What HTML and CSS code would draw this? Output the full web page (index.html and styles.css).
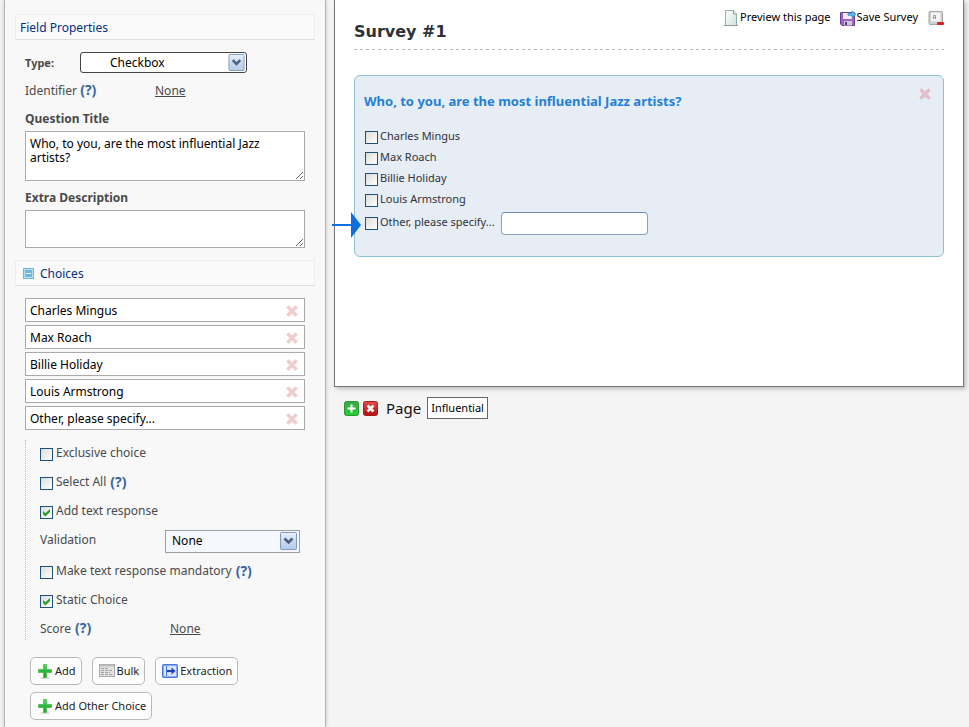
FILE: index.html
```html
<!DOCTYPE html>
<html lang="en">
<head>
<meta charset="utf-8">
<meta name="viewport" content="width=device-width, initial-scale=1">
<title>Survey Editor</title>
<link rel="stylesheet" href="styles.css">
</head>
<body>
<svg class="defs" aria-hidden="true">
  <defs>
    <linearGradient id="arrowFill" x1="0" y1="0" x2="0" y2="1"><stop offset="0" stop-color="#eaf1fb"/><stop offset="0.5" stop-color="#c9daf1"/><stop offset="1" stop-color="#b5cbe8"/></linearGradient>
    <linearGradient id="greenFill" x1="0" y1="0" x2="0" y2="1"><stop offset="0" stop-color="#5fdc63"/><stop offset="0.5" stop-color="#2fb53c"/><stop offset="1" stop-color="#1fa52e"/></linearGradient>
    <linearGradient id="redFill" x1="0" y1="0" x2="0" y2="1"><stop offset="0" stop-color="#e24a48"/><stop offset="1" stop-color="#b20f12"/></linearGradient>
    <linearGradient id="tileFill" x1="0" y1="0" x2="0" y2="1"><stop offset="0" stop-color="#3fa548"/><stop offset="1" stop-color="#1fd32c"/></linearGradient>
    <linearGradient id="pageFill" x1="0" y1="0" x2="1" y2="1"><stop offset="0" stop-color="#ffffff"/><stop offset="1" stop-color="#cfe2de"/></linearGradient>
    <symbol id="cross" viewBox="0 0 14 14"><path d="M1.500 3.500 3.500 1.500 7 4.800 10.500 1.500 12.500 3.500 9.400 7 12.500 10.500 10.500 12.500 7 9.400 3.500 12.500 1.500 10.500 4.800 7Z" fill="currentColor" stroke="currentColor" stroke-width="0.600" stroke-linejoin="round"/></symbol>
    <symbol id="drop" viewBox="0 0 17 18"><rect x="0.500" y="0.500" width="16" height="17" rx="1" fill="url(#arrowFill)" stroke="#7f9db9"/><path d="M4.500 6.500 8.500 10.500 12.500 6.500" fill="none" stroke="#4d6185" stroke-width="2.600"/></symbol>
    <symbol id="plus" viewBox="0 0 16 16"><ellipse cx="8" cy="15" rx="5" ry="0.800" fill="#ccc"/><path d="M6.500 1.500h3v5h5v3h-5v5h-3v-5h-5v-3h5Z" fill="url(#greenFill)" stroke="#3fbf4a" stroke-width="0.800"/></symbol>
  </defs>
</svg>
<div class="layout">
  <aside class="sidebar">
    <h2 class="bar">Field Properties</h2>
    <div class="fields">
      <div class="row type-row">
        <label class="type-label" for="type">Type:</label>
        <span class="select type-select"><select id="type"><option>Checkbox</option></select><svg class="drop" aria-hidden="true"><use href="#drop"/></svg></span>
      </div>
      <div class="row ident-row"><span class="cell">Identifier <a class="help" href="#">(?)</a></span><a class="value" href="#">None</a></div>
      <label class="title" for="question">Question Title</label>
      <textarea id="question" class="question">Who, to you, are the most influential Jazz artists?</textarea>
      <label class="title" for="extra">Extra Description</label>
      <textarea id="extra" class="extra"></textarea>
    </div>
    <h2 class="bar bar-choices"><svg class="toggle" viewBox="0 0 11 11" aria-hidden="true"><rect x="0.500" y="0.500" width="10" height="10" fill="#b9e2f2" stroke="#79b5d3"/><rect x="2" y="2" width="7" height="7" fill="#6db8dc"/><path d="M3 5.500h5" stroke="#fff"/></svg>Choices</h2>
    <div class="fields">
      <div class="choices">
        <div class="choice"><input type="text" aria-label="Choice 1" value="Charles Mingus"><button class="remove" aria-label="Remove choice 1"><svg><use href="#cross"/></svg></button></div>
        <div class="choice"><input type="text" aria-label="Choice 2" value="Max Roach"><button class="remove" aria-label="Remove choice 2"><svg><use href="#cross"/></svg></button></div>
        <div class="choice"><input type="text" aria-label="Choice 3" value="Billie Holiday"><button class="remove" aria-label="Remove choice 3"><svg><use href="#cross"/></svg></button></div>
        <div class="choice"><input type="text" aria-label="Choice 4" value="Louis Armstrong"><button class="remove" aria-label="Remove choice 4"><svg><use href="#cross"/></svg></button></div>
        <div class="choice"><input type="text" aria-label="Choice 5" value="Other, please specify..."><button class="remove" aria-label="Remove choice 5"><svg><use href="#cross"/></svg></button></div>
      </div>
      <div class="options">
        <div class="option"><input type="checkbox" id="exclusive"><label for="exclusive">Exclusive choice</label></div>
        <div class="option"><input type="checkbox" id="all"><label for="all">Select All</label><a class="help" href="#">(?)</a></div>
        <div class="option"><input type="checkbox" id="text" checked><label for="text">Add text response</label></div>
        <div class="option option-select"><label class="cell" for="validation">Validation</label><span class="select valid-select"><select id="validation"><option>None</option></select><svg class="drop" aria-hidden="true"><use href="#drop"/></svg></span></div>
        <div class="option"><input type="checkbox" id="mandatory"><label for="mandatory">Make text response mandatory</label><a class="help" href="#">(?)</a></div>
        <div class="option"><input type="checkbox" id="static" checked><label for="static">Static Choice</label></div>
        <div class="option"><span class="cell">Score<a class="help" href="#">(?)</a></span><a class="value" href="#">None</a></div>
      </div>
      <div class="actions">
        <button class="action"><svg><use href="#plus"/></svg>Add</button>
        <button class="action"><svg viewBox="0 0 16 16"><rect x="0.500" y="1.500" width="15" height="12" fill="#e2e2e2" stroke="#aaa"/><path d="M1 2.500h14" stroke="#bdbdbd" stroke-width="2"/><path d="M2 5.500h8M2 7.500h11M2 9.500h9M2 11.500h12" stroke="#a2a2a2" stroke-dasharray="3 1"/></svg>Bulk</button>
        <button class="action"><svg viewBox="0 0 16 16"><rect x="0.750" y="1.750" width="14.500" height="12.500" rx="1" fill="#d5e3fc" stroke="#4a75e0" stroke-width="1.500"/><path d="M4.500 3v10" stroke="#4a75e0"/><path d="M5 7h4.500V4.500L13.500 8l-4 3.500V9H5Z" fill="#1b41b4"/></svg>Extraction</button>
        <button class="action"><svg><use href="#plus"/></svg>Add Other Choice</button>
      </div>
    </div>
  </aside>
  <main class="main">
    <section class="sheet">
      <header class="head">
        <h1>Survey #1</h1>
        <nav class="tools">
          <a href="#"><svg viewBox="0 0 16 16"><path d="M2.500 0.500h8l3 3.500v11.500h-11Z" fill="url(#pageFill)" stroke="#8fb0a9"/><path d="M10.500 0.500V4h3" fill="#fff" stroke="#7ba096"/><path d="M1 15.500h14" stroke="#8a9c98"/></svg>Preview this page</a>
          <a href="#"><svg viewBox="0 0 16 16"><path d="M0.500 2.500h14v13H2L0.500 14Z" fill="#9a68c0" stroke="#68418e"/><rect x="3" y="3" width="9" height="6" fill="#f2edf6"/><rect x="4" y="11" width="8" height="4.500" fill="#cfc6d6"/><rect x="5" y="12" width="2" height="3" fill="#5c3a7c"/><path d="M8 3.200h4V1l4 3.300L12 7.500V5.300H8Z" fill="#5dbcf2" stroke="#247fc0" stroke-width="0.700"/></svg>Save Survey</a>
          <a href="#" class="key" aria-label="Keyboard shortcuts"><svg viewBox="0 0 16 16"><rect x="1" y="1.500" width="13.500" height="13" rx="1" fill="#cfcfcf" stroke="#a5a5a5"/><rect x="3" y="2.500" width="9.500" height="9" rx="1" fill="#f4f4f4"/><path d="M5.500 9V5.500h2V9M5.500 7.500h2" fill="none" stroke="#888" stroke-width="0.800"/><rect x="9" y="12" width="7" height="3" rx="1" fill="#d82020"/></svg></a>
        </nav>
      </header>
      <article class="card">
        <button class="remove card-remove" aria-label="Remove question"><svg><use href="#cross"/></svg></button>
        <h2>Who, to you, are the most influential Jazz artists?</h2>
        <div class="answer"><input type="checkbox" id="a1"><label for="a1">Charles Mingus</label></div>
        <div class="answer"><input type="checkbox" id="a2"><label for="a2">Max Roach</label></div>
        <div class="answer"><input type="checkbox" id="a3"><label for="a3">Billie Holiday</label></div>
        <div class="answer"><input type="checkbox" id="a4"><label for="a4">Louis Armstrong</label></div>
        <div class="answer answer-other"><svg class="pointer" viewBox="0 0 29 26" aria-hidden="true"><path d="M0 13h20" stroke="#0d6fe0" stroke-width="2"/><path d="M19 0 29 13 19 26Z" fill="#0d6fe0"/></svg><input type="checkbox" id="a5"><label for="a5">Other, please specify...</label><input type="text" class="other" aria-label="Other answer"></div>
      </article>
    </section>
    <footer class="pages">
      <button class="tile" aria-label="Add page"><svg viewBox="0 0 15 15"><rect x="0.500" y="0.500" width="14" height="14" rx="2" fill="url(#tileFill)" stroke="#2c9437"/><path d="M7.500 3.500v8M3.500 7.500h8" stroke="#fff" stroke-width="2"/></svg></button>
      <button class="tile" aria-label="Delete page"><svg viewBox="0 0 15 15"><rect x="0.500" y="0.500" width="14" height="14" rx="2" fill="url(#redFill)" stroke="#a51a1a"/><path d="m4.500 4.500 6 6M10.500 4.500l-6 6" stroke="#fff" stroke-width="2.500"/></svg></button>
      <span class="page-label">Page</span>
      <button class="page-name">Influential</button>
    </footer>
  </main>
</div>
</body>
</html>
```
FILE: styles.css
```css
* { box-sizing: border-box; }
body {
  margin: 0;
  background: #f4f4f4;
  color: #4a4a4a;
  font: 12px/16px "Noto Sans", sans-serif;
}
h1, h2 { margin: 0; }
input, button, textarea, select { font: inherit; margin: 0; }
button { cursor: pointer; }
a { color: inherit; }
.defs { position: absolute; width: 0; height: 0; }

.layout { display: flex; align-items: stretch; min-height: 100vh; padding-left: 4px; }
.sidebar {
  flex: 0 0 322px;
  padding: 14px 10px 7px;
  background: #f8f8f8;
  border: solid #b4b4b4;
  border-width: 0 1px;
  box-shadow: 0 0 4px #c4c4c4;
}
.bar {
  display: flex;
  align-items: center;
  height: 26px;
  padding: 2px 4px 0;
  background: #fafafa;
  border: 1px solid #eee;
  border-bottom-color: #ddd;
  color: #03307f;
  font-size: 12px;
  font-weight: 400;
}
.bar-choices { margin-top: 12px; padding: 1px 7px 0; gap: 6px; }
.toggle { width: 11px; height: 11px; }
.fields { padding: 12px 10px 0; }
.row { display: flex; align-items: center; }
.type-row { height: 21px; }
.type-label { width: 55px; font-size: 11px; font-weight: 700; }
.ident-row { height: 16px; margin: 10px 0 12px; }
.ident-row .cell { width: 130px; }
.help { color: #36659f; font-size: 14px; line-height: 14px; font-weight: 700; text-decoration: none; }
.value { text-decoration: underline; }
.title { display: block; height: 16px; margin-bottom: 4px; font-weight: 700; }
.select { position: relative; display: block; }
.select select { appearance: none; width: 100%; height: 100%; color: #000; background: #fff; }
.drop { position: absolute; top: 2px; right: 2px; width: 17px; height: 17px; pointer-events: none; }
.type-select { width: 167px; height: 21px; }
.type-select select { padding: 0 29px; border: 1px solid #444; border-radius: 3px; }
.valid-select { width: 135px; height: 23px; }
.valid-select select { padding: 0 6px; border: 1px solid #9a9fa2; background: #f5f9ff; }
.valid-select .drop { right: 3px; height: 18px; }
textarea {
  display: block;
  width: 100%;
  padding: 5px 4px;
  border: 1px solid #aaa;
  color: #000;
  line-height: 14px;
}
.question { height: 50px; margin-bottom: 9px; }
.extra { height: 38px; }

.choices { display: grid; gap: 3px; }
.choice { position: relative; }
.choice input { display: block; width: 100%; height: 24px; padding: 0 24px 0 4px; border: 1px solid #aaa; color: #000; }
.remove { position: absolute; top: 6px; right: 6px; padding: 0; border: 0; background: none; color: #f0cccc; }
.remove svg { display: block; width: 14px; height: 14px; }

input[type="checkbox"] {
  appearance: none;
  flex: none;
  width: 13px;
  height: 13px;
  margin-top: 3px;
  border: 1px solid #1c5180;
  background: linear-gradient(135deg, #dcdcd7, #fff);
}
input[type="checkbox"]:checked::after {
  content: "";
  display: block;
  width: 11px;
  height: 11px;
  background: #21a121;
  clip-path: polygon(18% 36%, 40% 56%, 82% 18%, 82% 46%, 40% 86%, 18% 64%);
}
.options {
  display: grid;
  gap: 13px;
  margin-top: 10px;
  padding: 5px 0 3px 14px;
  border-left: 1px dotted #bbb;
}
.option { display: flex; align-items: center; height: 16px; }
.option label { margin-left: 3px; }
.option .help { margin-left: 4px; }
.option .cell { width: 130px; margin-left: 0; }
.option-select { height: 18px; }
.option-select .cell { width: 125px; padding-bottom: 2px; }

.actions { display: flex; flex-wrap: wrap; gap: 7px 10px; margin-top: 17px; padding-left: 5px; }
.action {
  display: flex;
  align-items: center;
  gap: 2px;
  height: 28px;
  padding: 0 5px 0 6px;
  border: 1px solid #b9b9b9;
  border-radius: 5px;
  background: #fdfdfd;
  color: #222;
  font-size: 11px;
}
.action svg { width: 16px; height: 16px; }

.main { flex: 1; min-width: 0; padding: 0 5px 0 8px; }
.sheet {
  padding: 0 19px 129px;
  border: 1px solid #777;
  border-top: 0;
  background: #fff;
  box-shadow: 2px 2px 4px #bbb;
}
.head {
  display: flex;
  justify-content: space-between;
  height: 50px;
  background: repeating-linear-gradient(90deg, #bbb 0 3px, transparent 3px 6px) bottom / 100% 1px no-repeat;
}
h1 { padding-top: 21px; color: #2c3237; font: 700 16px/22px "DejaVu Sans", sans-serif; }
.tools { display: flex; height: 18px; margin-top: 8px; font-size: 11px; }
.tools a { display: flex; align-items: center; gap: 1px; margin-left: 9px; color: #000; text-decoration: none; }
.tools svg { width: 16px; height: 16px; margin-top: 2px; }
.tools .key { margin-left: 10px; }
.card {
  position: relative;
  margin-top: 25px;
  padding: 16px 9px 21px;
  border: 1px solid #8fbfd2;
  border-radius: 6px;
  background: #e6edf5;
  color: #2f343b;
  font-size: 11px;
}
.card h2 { margin-bottom: 15px; color: #2380d6; font-size: 13px; line-height: 18px; }
.card-remove { top: 11px; right: 11px; color: #e2bfc7; }
.answer { display: flex; align-items: center; height: 21px; padding-left: 1px; }
.answer label { margin-left: 2px; }
.answer-other { position: relative; height: 23px; margin-top: 3px; }
.answer-other label { padding-bottom: 3px; }
.answer-other input[type="checkbox"] { margin-top: 0; }
.other { width: 147px; height: 23px; margin-left: 6px; border: 1px solid #8ba0c0; border-top-color: #6f88b8; border-radius: 4px; background: #fff; }
.pointer { position: absolute; top: 0; left: -32px; width: 29px; height: 26px; }

.pages { display: flex; align-items: center; gap: 4px; padding: 10px 10px 0; }
.tile { padding: 0; border: 0; background: none; }
.tile svg { display: block; width: 15px; height: 15px; }
.page-label { margin: 0 2px 0 4px; color: #111; font-size: 15px; line-height: 20px; }
.page-name { height: 22px; padding: 0 3px; border: 1px solid #666; background: #fff; color: #000; font-size: 11px; }
```
